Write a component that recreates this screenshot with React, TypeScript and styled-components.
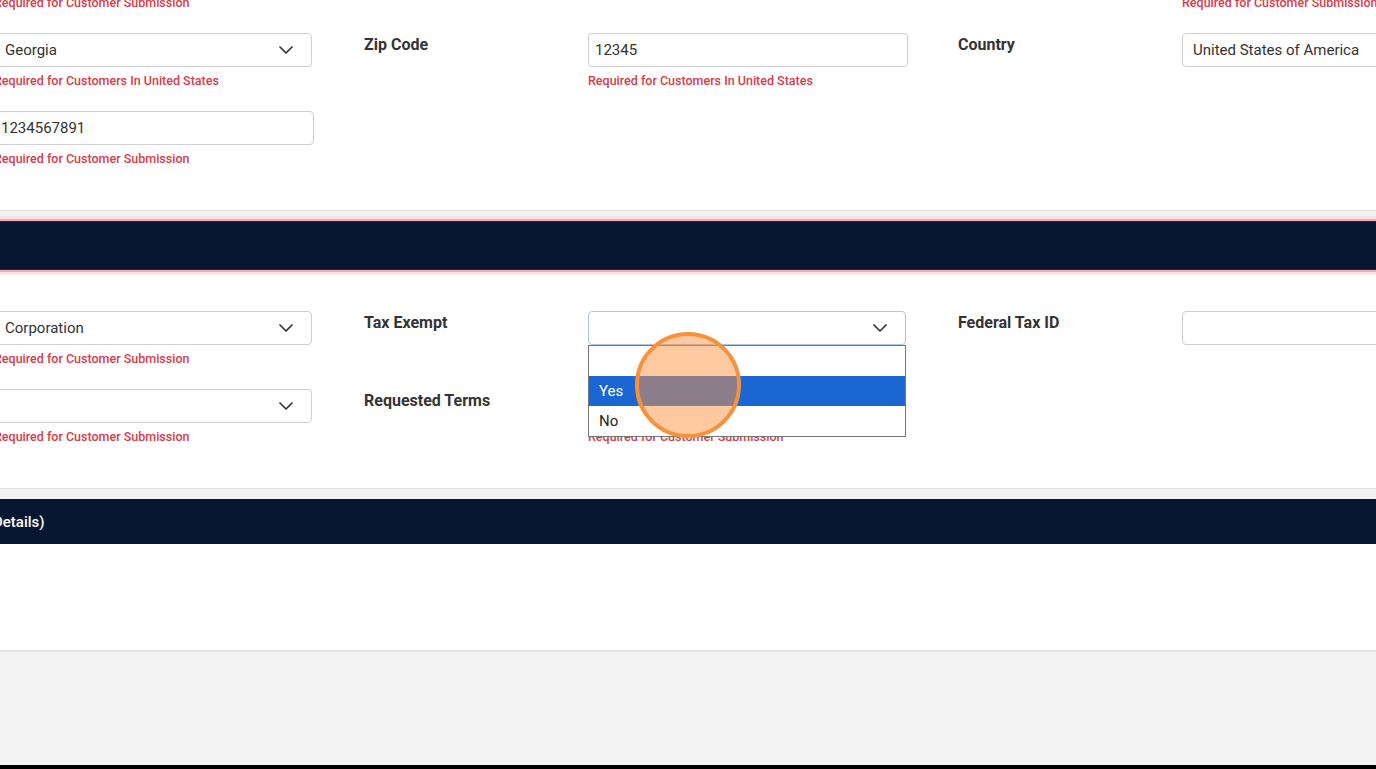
import React from 'react'
import styled, { createGlobalStyle } from 'styled-components'

const GlobalStyle = createGlobalStyle`
  html, body {
    margin: 0;
    padding: 0;
  }
  body {
    font-family: Roboto, 'Liberation Sans', Arial, sans-serif;
    color: #333;
    background: #f4f3f3;
    overflow: hidden;
  }
`

const Frame = styled.div`
  height: 100vh;
  display: flex;
  flex-direction: column;
  overflow: hidden;
  background: #f4f3f3;
`

const Sheet = styled.div`
  width: 1900px;
  margin: -86px 0 0 -246px;
  display: flex;
  flex-direction: column;
  gap: 10px;
  flex-shrink: 0;
`

const Section = styled.section`
  display: flex;
  flex-direction: column;
`

const SectionHeader = styled.div<{ $active?: boolean }>`
  position: relative;
  z-index: 1;
  box-sizing: border-box;
  height: ${(p) => (p.$active ? '49px' : '45px')};
  padding: 0 0 0 ${(p) => (p.$active ? '16px' : '56px')};
  display: flex;
  align-items: center;
  background: #081731;
  color: #fff;
  font-size: 15px;
  font-weight: 500;
  border: ${(p) => (p.$active ? '1px solid #4d1830' : 'none')};
  box-shadow: ${(p) => (p.$active ? '0 0 0 2px #f3acb5, 0 0 0 5px rgba(246, 200, 208, 0.45)' : 'none')};
`

const SectionBody = styled.div<{ $empty?: boolean }>`
  background: #fff;
  padding: ${(p) => (p.$empty ? '0' : '41px 16px 43px')};
  min-height: ${(p) => (p.$empty ? '106px' : '0')};
  border-bottom: ${(p) => (p.$empty ? '2px solid #e2e2e0' : '1px solid #e4e4e4')};
  display: flex;
  flex-direction: column;
  gap: 22px;
`

const Row = styled.div`
  display: grid;
  grid-template-columns: repeat(3, 544px);
  column-gap: 50px;
  align-items: start;
`

const Field = styled.div`
  display: grid;
  grid-template-columns: 224px 320px;
  align-items: start;
`

const Label = styled.label`
  padding-top: 1px;
  font-size: 16px;
  font-weight: 700;
  line-height: 22px;
  color: #333;
`

const Control = styled.div`
  position: relative;
  display: flex;
  flex-direction: column;
  gap: 6px;
`

const Box = styled.div<{ $select?: boolean; $focused?: boolean }>`
  box-sizing: border-box;
  height: 34px;
  width: ${(p) => (p.$select ? '318px' : '320px')};
  border: 1px solid ${(p) => (p.$focused ? '#a9c6e6' : '#cfcfcf')};
  border-radius: 4px;
  background: #fff;
  display: flex;
  align-items: center;
  justify-content: space-between;
  padding: 0 18px 0 ${(p) => (p.$select ? '10px' : '6px')};
  font-size: 15px;
  color: #333;
  white-space: nowrap;
`

const ErrorText = styled.span`
  font-size: 12.5px;
  font-weight: 500;
  line-height: 16px;
  color: #d83c4a;
  white-space: nowrap;
`

const OptionList = styled.div`
  position: absolute;
  z-index: 4;
  top: 34px;
  left: 0;
  width: 318px;
  box-sizing: border-box;
  border: 1px solid #767676;
  background: #fff;
`

const Option = styled.div<{ $active?: boolean }>`
  height: 30px;
  display: flex;
  align-items: center;
  padding-left: 10px;
  font-size: 15px;
  background: ${(p) => (p.$active ? '#1a66d3' : '#fff')};
  color: ${(p) => (p.$active ? '#fff' : '#222')};
`

const ClickMarker = styled.div`
  position: absolute;
  z-index: 5;
  left: 47px;
  top: 21px;
  width: 106px;
  height: 106px;
  box-sizing: border-box;
  border-radius: 50%;
  border: 4px solid #f7913a;
  background: rgba(251, 147, 66, 0.5);
  pointer-events: none;
`

const Filler = styled.div`
  flex: 1;
`

const BottomEdge = styled.div`
  height: 4px;
  flex-shrink: 0;
  background: #000;
`

const Chevron = () => (
  <svg width="14" height="8" viewBox="0 0 14 8" fill="none">
    <polyline points="1,1 7,7 13,1" stroke="#333" strokeWidth="1.7" strokeLinecap="round" strokeLinejoin="round" />
  </svg>
)

interface FormFieldProps {
  label: string
  value?: string
  select?: boolean
  error?: string
  focused?: boolean
  children?: React.ReactNode
}

const FormField: React.FC<FormFieldProps> = ({ label, value, select, error, focused, children }) => (
  <Field>
    <Label>{label}</Label>
    <Control>
      <Box $select={select} $focused={focused}>
        <span>{value}</span>
        {select && <Chevron />}
      </Box>
      {error && <ErrorText>{error}</ErrorText>}
      {children}
    </Control>
  </Field>
)

const SUBMIT = 'Required for Customer Submission'
const US_ONLY = 'Required for Customers In United States'

const App: React.FC = () => {
  return (
    <Frame>
      <GlobalStyle />
      <Sheet>
        <Section>
          <SectionBody>
            <Row>
              <FormField label="City" value="Atlanta" error={SUBMIT} />
              <FormField label="Address Line 2" />
              <FormField label="County" value="Fulton" error={SUBMIT} />
            </Row>
            <Row>
              <FormField label="State" value="Georgia" select error={US_ONLY} />
              <FormField label="Zip Code" value="12345" error={US_ONLY} />
              <FormField label="Country" value="United States of America" select />
            </Row>
            <Row>
              <FormField label="Phone" value="1234567891" error={SUBMIT} />
            </Row>
          </SectionBody>
        </Section>

        <Section>
          <SectionHeader $active>Tax Information</SectionHeader>
          <SectionBody>
            <Row>
              <FormField label="Business Type" value="Corporation" select error={SUBMIT} />
              <FormField label="Tax Exempt" select focused>
                <OptionList>
                  <Option />
                  <Option $active>Yes</Option>
                  <Option>No</Option>
                </OptionList>
                <ClickMarker />
              </FormField>
              <FormField label="Federal Tax ID" />
            </Row>
            <Row>
              <FormField label="Credit Limit" select error={SUBMIT} />
              <FormField label="Requested Terms" select error={SUBMIT} />
            </Row>
          </SectionBody>
        </Section>

        <Section>
          <SectionHeader>Bank Information (Banking Details)</SectionHeader>
          <SectionBody $empty />
        </Section>
      </Sheet>
      <Filler />
      <BottomEdge />
    </Frame>
  )
}

export default App
